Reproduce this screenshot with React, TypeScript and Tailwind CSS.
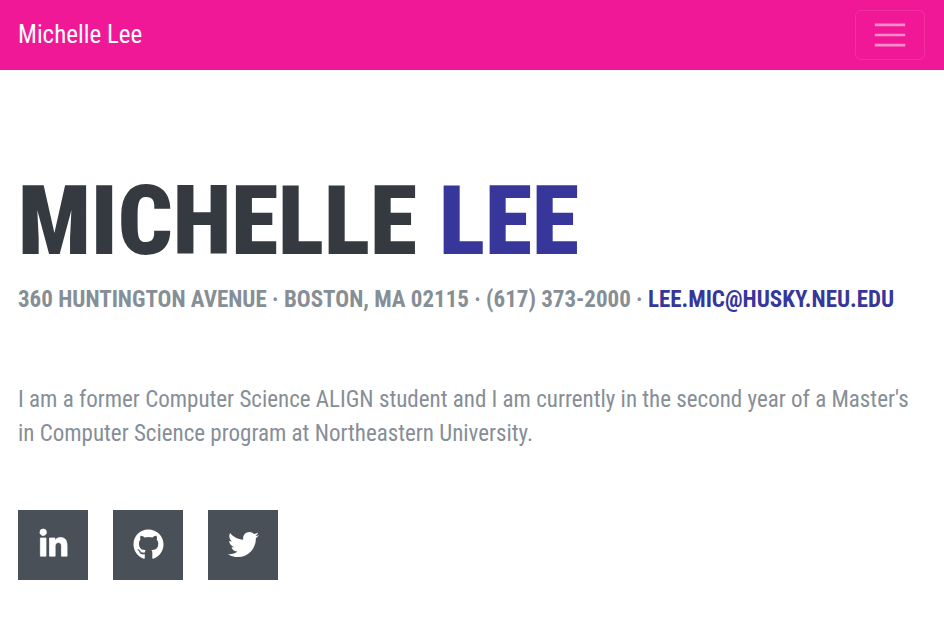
import { FaGithub, FaLinkedinIn, FaTwitter } from "react-icons/fa";

const socials = [
  { name: "LinkedIn", Icon: FaLinkedinIn, strokeWidth: 12 },
  { name: "GitHub", Icon: FaGithub, strokeWidth: 0 },
  { name: "Twitter", Icon: FaTwitter, strokeWidth: 0 },
];

export default function App() {
  return (
    <div className="min-h-screen bg-white font-['Roboto_Condensed',Roboto,sans-serif] text-[#868e96]">
      <nav className="flex items-center justify-between bg-[#f01896] py-[10px] pr-[19px] pl-[18px]">
        <a href="#about" className="text-[25px] leading-[38px] text-white">Michelle Lee</a>
        <button type="button" aria-label="Toggle navigation" className="flex h-[50px] w-[70px] items-center justify-center rounded-md border border-white/10 text-white/50">
          <svg viewBox="0 0 30 30" className="size-[38px]" fill="none" stroke="currentColor" strokeWidth="2" strokeMiterlimit="10" aria-hidden="true">
            <path d="M3 7h24M3 15h24M3 23h24" />
          </svg>
        </button>
      </nav>
      <main id="about" className="px-[18px] pt-[93px] pb-[62px]">
        <h1 className="text-[96px] leading-[116px] font-black text-[#343a40] uppercase">
          Michelle <span className="text-[#37379b]">Lee</span>
        </h1>
        <p className="mt-1 text-[23px] leading-[34px] font-bold uppercase">
          360 Huntington Avenue · Boston, MA 02115 · (617) 373-2000 · <a href="mailto:lee.mic@husky.neu.edu" className="text-[#37379b]">lee.mic@husky.neu.edu</a>
        </p>
        <p className="mt-[66px] text-[23px] leading-[34px]">
          I am a former Computer Science ALIGN student and I am currently in the second year of a Master's in Computer Science program at Northeastern University.
        </p>
        <div className="mt-[59px] flex gap-[25px]">
          {socials.map(({ name, Icon, strokeWidth }) => (
            <a key={name} href="#about" aria-label={name} className="flex size-[70px] items-center justify-center bg-[#495057] pb-0.5 text-[31px] text-white">
              <Icon className="overflow-visible" strokeWidth={strokeWidth} />
            </a>
          ))}
        </div>
      </main>
    </div>
  );
}
